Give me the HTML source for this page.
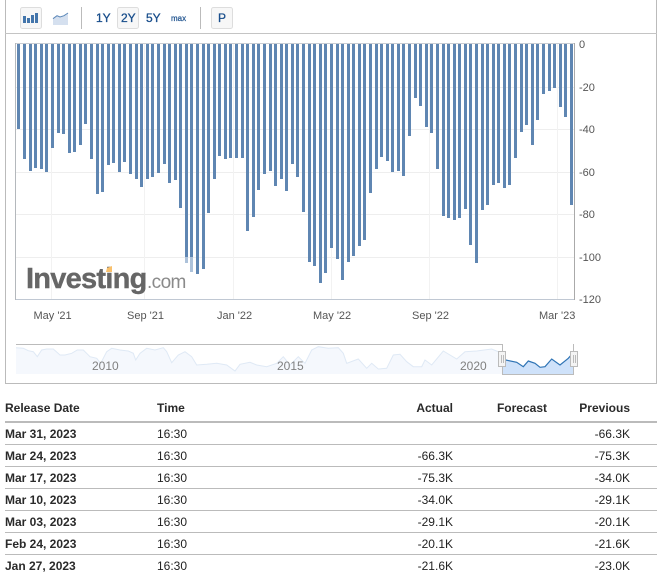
<!DOCTYPE html>
<html>
<head>
<meta charset="utf-8">
<style>
html,body{margin:0;padding:0;background:#fff;width:662px;height:574px;overflow:hidden}
svg{display:block}
text{font-family:"Liberation Sans",Arial,sans-serif}
.ax{font-size:11px;fill:#555}
.tb{font-size:12px;fill:#1a4f8c;stroke:#1a4f8c;stroke-width:.3px}
.h{font-size:12px;font-weight:bold;fill:#2a2a2a}
.d{font-size:12px;font-weight:bold;fill:#2a2a2a}
.t{font-size:12px;fill:#222}
.e{text-anchor:end}
.n{font-size:12px;fill:#808080}
</style>
</head>
<body>
<svg width="662" height="574" viewBox="0 0 662 574" xmlns="http://www.w3.org/2000/svg">
<!-- frame -->
<g shape-rendering="crispEdges">
<rect x="0" y="0" width="662" height="574" fill="#fff"/>
<rect x="5" y="0" width="1" height="384" fill="#bbb"/>
<rect x="656" y="0" width="1" height="384" fill="#bbb"/>
<rect x="5" y="383" width="652" height="1" fill="#bbb"/>
<rect x="5" y="33" width="652" height="1" fill="#c4c4c4"/>
<!-- toolbar -->
<rect x="81" y="7" width="1" height="22" fill="#bbb"/>
<rect x="200" y="7" width="1" height="22" fill="#bbb"/>
</g>
<rect x="20.5" y="7.5" width="21" height="21" rx="2" fill="#f7f7f7" stroke="#ddd"/>
<rect x="117.5" y="7.5" width="21" height="21" rx="2" fill="#f7f7f7" stroke="#ddd"/>
<rect x="211.5" y="7.5" width="21" height="21" rx="2" fill="#f7f7f7" stroke="#ddd"/>
<g fill="#4375ab" shape-rendering="crispEdges">
<rect x="23" y="16" width="3" height="7"/>
<rect x="27" y="18" width="3" height="5"/>
<rect x="31" y="15" width="3" height="8"/>
<rect x="35" y="13" width="3" height="10"/>
</g>
<path d="M53 18.7 L57 15.7 L60 17 L64 15.7 L68 13 V25 H53 Z" fill="#d5e0ef"/>
<path d="M53 18.7 L57 15.7 L60 17 L64 15.7 L68 13" fill="none" stroke="#5b87b8" stroke-width="1"/>
<text class="tb" x="96" y="22">1Y</text>
<text class="tb" x="121" y="22">2Y</text>
<text class="tb" x="146" y="22">5Y</text>
<text x="171" y="21" style="font-size:8px;fill:#1a4f8c;stroke:#1a4f8c;stroke-width:.2px">max</text>
<text class="tb" x="218" y="22">P</text>
<!-- grid -->
<g shape-rendering="crispEdges" fill="#eee">
<rect x="16" y="87" width="558" height="1"/>
<rect x="16" y="129" width="558" height="1"/>
<rect x="16" y="172" width="558" height="1"/>
<rect x="16" y="214" width="558" height="1"/>
<rect x="16" y="257" width="558" height="1"/>
<rect x="51" y="44" width="1" height="255" fill="#f2f2f2"/>
<rect x="144" y="44" width="1" height="255" fill="#f2f2f2"/>
<rect x="233" y="44" width="1" height="255" fill="#f2f2f2"/>
<rect x="331" y="44" width="1" height="255" fill="#f2f2f2"/>
<rect x="429" y="44" width="1" height="255" fill="#f2f2f2"/>
<rect x="557" y="44" width="1" height="255" fill="#f2f2f2"/>
</g>
<!-- bars -->
<path shape-rendering="crispEdges" fill="#5f86b2" d="M17 44h3V129h-3zM23 44h3V159h-3zM29 44h3V171h-3zM34 44h3V168h-3zM40 44h3V169h-3zM45 44h3V172h-3zM51 44h3V148h-3zM57 44h3V133h-3zM62 44h3V134h-3zM68 44h3V153h-3zM73 44h3V152h-3zM79 44h3V145h-3zM84 44h3V124h-3zM90 44h3V159h-3zM96 44h3V194h-3zM101 44h3V192h-3zM107 44h3V165h-3zM112 44h3V163h-3zM118 44h3V172h-3zM123 44h3V162h-3zM129 44h3V174h-3zM135 44h3V179h-3zM140 44h3V187h-3zM146 44h3V179h-3zM151 44h3V177h-3zM157 44h3V173h-3zM163 44h3V164h-3zM168 44h3V183h-3zM174 44h3V180h-3zM179 44h3V208h-3zM185 44h3V257h-3zM190 44h3V257h-3zM196 44h3V274h-3zM202 44h3V269h-3zM207 44h3V213h-3zM213 44h3V179h-3zM218 44h3V156h-3zM224 44h3V159h-3zM229 44h3V158h-3zM235 44h3V158h-3zM241 44h3V158h-3zM246 44h3V231h-3zM252 44h3V217h-3zM257 44h3V190h-3zM263 44h3V174h-3zM269 44h3V171h-3zM274 44h3V186h-3zM280 44h3V179h-3zM285 44h3V191h-3zM291 44h3V164h-3zM296 44h3V177h-3zM302 44h3V212h-3zM308 44h3V262h-3zM313 44h3V266h-3zM319 44h3V283h-3zM324 44h3V273h-3zM330 44h3V248h-3zM336 44h3V259h-3zM341 44h3V280h-3zM347 44h3V262h-3zM352 44h3V256h-3zM358 44h3V246h-3zM363 44h3V240h-3zM369 44h3V193h-3zM375 44h3V169h-3zM380 44h3V157h-3zM386 44h3V161h-3zM391 44h3V172h-3zM397 44h3V171h-3zM402 44h3V176h-3zM408 44h3V136h-3zM414 44h3V98h-3zM419 44h3V106h-3zM425 44h3V127h-3zM430 44h3V133h-3zM436 44h3V169h-3zM442 44h3V216h-3zM447 44h3V218h-3zM453 44h3V220h-3zM458 44h3V218h-3zM464 44h3V209h-3zM469 44h3V245h-3zM475 44h3V263h-3zM481 44h3V210h-3zM486 44h3V205h-3zM492 44h3V185h-3zM497 44h3V183h-3zM503 44h3V188h-3zM508 44h3V185h-3zM514 44h3V158h-3zM520 44h3V132h-3zM525 44h3V125h-3zM531 44h3V145h-3zM536 44h3V120h-3zM542 44h3V94h-3zM548 44h3V91h-3zM553 44h3V88h-3zM559 44h3V107h-3zM564 44h3V117h-3zM570 44h3V205h-3z"/>
<g shape-rendering="crispEdges" fill="#adc2da">
<rect x="185" y="257" width="3" height="6"/>
<rect x="190" y="257" width="3" height="15"/>
</g>
<!-- plot borders -->
<g shape-rendering="crispEdges">
<rect x="15" y="43" width="560" height="1" fill="#c8ccd2"/>
<rect x="15" y="299" width="560" height="1" fill="#c0c8d3"/>
<rect x="15" y="43" width="1" height="257" fill="#b4b8bc"/>
<rect x="574" y="43" width="1" height="257" fill="#aaa"/>
</g>
<!-- logo -->
<text x="26" y="288" style="font-size:29px;font-weight:bold;fill:#666;stroke:#666;stroke-width:.4px;letter-spacing:-.75px">Investing</text>
<text x="147" y="288" style="font-size:19px;fill:#8a8a8a;letter-spacing:-.6px">.com</text>
<path d="M107 268 L112 266 L112 272 L106 272 Z" fill="#f9c06b"/>
<!-- axis labels -->
<g class="ax">
<text x="579" y="48">0</text>
<text x="579" y="91">-20</text>
<text x="579" y="133">-40</text>
<text x="579" y="176">-60</text>
<text x="579" y="218">-80</text>
<text x="579" y="261">-100</text>
<text x="579" y="303">-120</text>
<text x="33.5" y="319">May '21</text>
<text x="127" y="319">Sep '21</text>
<text x="217" y="319">Jan '22</text>
<text x="313" y="319">May '22</text>
<text x="412" y="319">Sep '22</text>
<text x="539" y="319">Mar '23</text>
</g>
<!-- navigator -->
<path d="M16 347.7 L23.3 348.3 L28.3 350.7 L33.3 351.7 L37.3 356.7 L41.7 350 L46.7 349 L53.3 349 L60 355 L65 355 L71.7 353.3 L77.3 350 L83.3 350 L90 356.7 L96.7 358.3 L100.7 363.3 L106.7 351.7 L111.7 348.3 L120 350 L128.3 351 L133.3 353.3 L135.7 360 L140 353.3 L146.7 348.3 L155 350 L163.3 347.7 L166.7 351.7 L171.7 362.7 L178.3 355 L185 351.7 L191.7 356.7 L196.7 365 L206.7 364.3 L216.7 363.3 L226.7 365 L235 371 L240 364.3 L250 362.3 L256.7 365 L266.7 366.7 L276.7 363.3 L283.3 356.7 L290 365 L298.3 356.7 L305 363.3 L311.7 350 L318.3 346.7 L328.3 348.3 L338.3 347.7 L343.3 353.3 L346.7 363.3 L358.3 359 L366.7 368.3 L371.7 363.3 L378.3 369 L386.7 368.3 L393.3 355 L400 354.3 L406.7 361.7 L413.3 366.7 L421.7 366.7 L425 360 L431.7 365 L443.3 351 L456.7 359 L465 351.7 L476.7 351 L491.7 349 L498.3 351.7 L502 351.7 V374 H16 Z" fill="#f5f8fd"/>
<path d="M16 347.7 L23.3 348.3 L28.3 350.7 L33.3 351.7 L37.3 356.7 L41.7 350 L46.7 349 L53.3 349 L60 355 L65 355 L71.7 353.3 L77.3 350 L83.3 350 L90 356.7 L96.7 358.3 L100.7 363.3 L106.7 351.7 L111.7 348.3 L120 350 L128.3 351 L133.3 353.3 L135.7 360 L140 353.3 L146.7 348.3 L155 350 L163.3 347.7 L166.7 351.7 L171.7 362.7 L178.3 355 L185 351.7 L191.7 356.7 L196.7 365 L206.7 364.3 L216.7 363.3 L226.7 365 L235 371 L240 364.3 L250 362.3 L256.7 365 L266.7 366.7 L276.7 363.3 L283.3 356.7 L290 365 L298.3 356.7 L305 363.3 L311.7 350 L318.3 346.7 L328.3 348.3 L338.3 347.7 L343.3 353.3 L346.7 363.3 L358.3 359 L366.7 368.3 L371.7 363.3 L378.3 369 L386.7 368.3 L393.3 355 L400 354.3 L406.7 361.7 L413.3 366.7 L421.7 366.7 L425 360 L431.7 365 L443.3 351 L456.7 359 L465 351.7 L476.7 351 L491.7 349 L498.3 351.7 L502 351.7" fill="none" stroke="#dfe9f5" stroke-width="1"/>
<path d="M502 360 L505.7 360 L516.7 362.3 L523.3 366.7 L528.3 361 L535 363.3 L540 367.3 L545 366.7 L551.7 359 L560 365 L568.3 358.3 L573 353 V374 H502 Z" fill="#cfe2fa"/>
<path d="M505.7 360 L516.7 362.3 L523.3 366.7 L528.3 361 L535 363.3 L540 367.3 L545 366.7 L551.7 359 L560 365 L568.3 358.3 L573 353" fill="none" stroke="#2f74b5" stroke-width="1.2"/>
<text class="n" x="92" y="370">2010</text>
<text class="n" x="277" y="370">2015</text>
<text class="n" x="460" y="370">2020</text>
<g shape-rendering="crispEdges">
<rect x="16" y="344" width="486" height="1" fill="#bbb"/>
<rect x="502" y="344" width="1" height="30" fill="#bbb"/>
<rect x="502" y="374" width="72" height="1" fill="#bbb"/>
<rect x="573" y="344" width="1" height="31" fill="#bbb"/>
<rect x="498.5" y="351.5" width="7" height="15" fill="#f4f4f4" stroke="#bbb"/>
<rect x="570.5" y="351.5" width="7" height="15" fill="#f4f4f4" stroke="#bbb"/>
<rect x="501" y="355" width="1" height="8" fill="#bbb"/>
<rect x="503" y="355" width="1" height="8" fill="#bbb"/>
<rect x="573" y="355" width="1" height="8" fill="#bbb"/>
<rect x="575" y="355" width="1" height="8" fill="#bbb"/>
</g>
<!-- table -->
<g shape-rendering="crispEdges" fill="#bbb">
<rect x="5" y="421" width="652" height="2"/>
<rect x="5" y="444" width="652" height="1"/>
<rect x="5" y="466" width="652" height="1"/>
<rect x="5" y="488" width="652" height="1"/>
<rect x="5" y="510" width="652" height="1"/>
<rect x="5" y="532" width="652" height="1"/>
<rect x="5" y="554" width="652" height="1"/>
</g>
<text class="h" x="5" y="412">Release Date</text>
<text class="h" x="157" y="412">Time</text>
<text class="h e" x="453" y="412">Actual</text>
<text class="h e" x="547" y="412">Forecast</text>
<text class="h e" x="630" y="412">Previous</text>

<text class="d" x="5" y="438">Mar 31, 2023</text><text class="t" x="157" y="438">16:30</text><text class="t e" x="630" y="438">-66.3K</text>
<text class="d" x="5" y="460">Mar 24, 2023</text><text class="t" x="157" y="460">16:30</text><text class="t e" x="453" y="460">-66.3K</text><text class="t e" x="630" y="460">-75.3K</text>
<text class="d" x="5" y="482">Mar 17, 2023</text><text class="t" x="157" y="482">16:30</text><text class="t e" x="453" y="482">-75.3K</text><text class="t e" x="630" y="482">-34.0K</text>
<text class="d" x="5" y="504">Mar 10, 2023</text><text class="t" x="157" y="504">16:30</text><text class="t e" x="453" y="504">-34.0K</text><text class="t e" x="630" y="504">-29.1K</text>
<text class="d" x="5" y="526">Mar 03, 2023</text><text class="t" x="157" y="526">16:30</text><text class="t e" x="453" y="526">-29.1K</text><text class="t e" x="630" y="526">-20.1K</text>
<text class="d" x="5" y="548">Feb 24, 2023</text><text class="t" x="157" y="548">16:30</text><text class="t e" x="453" y="548">-20.1K</text><text class="t e" x="630" y="548">-21.6K</text>
<text class="d" x="5" y="570">Jan 27, 2023</text><text class="t" x="157" y="570">16:30</text><text class="t e" x="453" y="570">-21.6K</text><text class="t e" x="630" y="570">-23.0K</text>
</svg>
</body>
</html>
